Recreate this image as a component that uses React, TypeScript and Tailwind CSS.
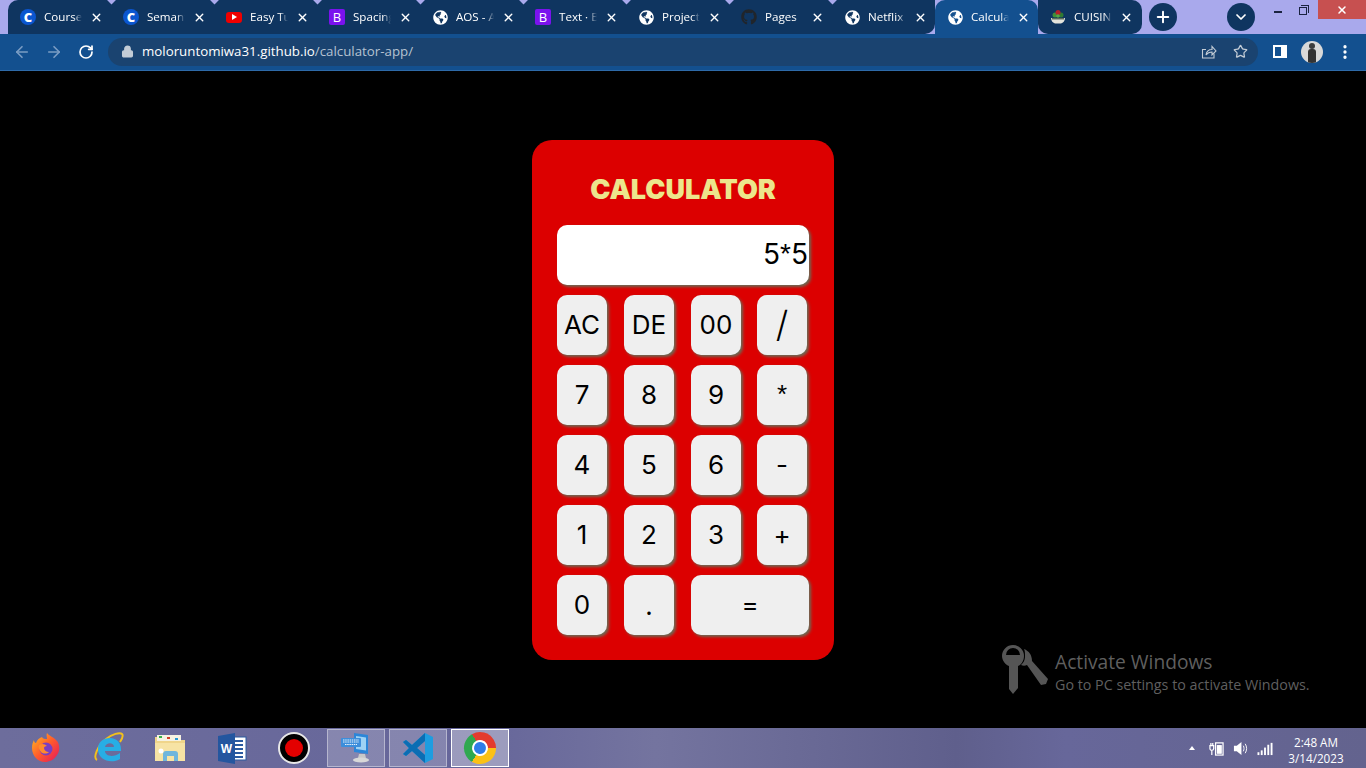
import { FaGithub, FaGlobeAmericas } from "react-icons/fa";
import { ArrowLeft, ArrowRight, ChevronDown, Lock, MoreVertical, Plus, RotateCw, Star, X } from "lucide-react";

type Tab = { title: string; icon: "c" | "yt" | "b" | "globe" | "gh" | "food"; active?: boolean };

const tabs: Tab[] = [
  { title: "Coursera", icon: "c" },
  { title: "Semantic", icon: "c" },
  { title: "Easy Tutorials", icon: "yt" },
  { title: "Spacing", icon: "b" },
  { title: "AOS - Animate", icon: "globe" },
  { title: "Text · Bootstrap", icon: "b" },
  { title: "Project", icon: "globe" },
  { title: "Pages", icon: "gh" },
  { title: "Netflix", icon: "globe" },
  { title: "Calculator", icon: "globe", active: true },
  { title: "CUISINE", icon: "food" },
];

const keys = [
  ["AC", "DE", "00", "/"],
  ["7", "8", "9", "*"],
  ["4", "5", "6", "-"],
  ["1", "2", "3", "+"],
];

const keyClass =
  "flex h-[60px] w-[50px] items-center justify-center rounded-[10px] bg-[#efefef] pb-[2px] text-[26px] text-black shadow-[2px_2px_3px_#6b6b55]";

const KeyLabel = ({ label }: { label: string }) => {
  if (label === "*") return <span className="font-['Liberation_Sans',sans-serif]">*</span>;
  if (label === "/") return <span className="text-[36px] font-light">/</span>;
  return <>{label}</>;
};

const Favicon = ({ icon }: { icon: Tab["icon"] }) => {
  if (icon === "c")
    return (
      <span className="flex h-4 w-4 items-center justify-center rounded-full bg-[#0b56d0] text-[13px] font-extrabold leading-none text-white">
        C
      </span>
    );
  if (icon === "yt")
    return (
      <span className="flex h-[11px] w-4 items-center justify-center rounded-[3px] bg-[#f00000]">
        <span className="h-0 w-0 border-y-[3px] border-l-[5px] border-y-transparent border-l-white" />
      </span>
    );
  if (icon === "b")
    return (
      <span className="flex h-4 w-4 items-center justify-center rounded-[2px] bg-[#7a12ee] text-[13px] leading-none text-white">
        B
      </span>
    );
  if (icon === "globe") return <FaGlobeAmericas className="h-[15px] w-[15px] text-white" />;
  if (icon === "gh") return <FaGithub className="h-4 w-4 text-[#20252b]" />;
  return (
    <svg viewBox="0 0 16 16" className="h-4 w-4">
      <path d="M1 9h14c0 3-2 5-4 5.500H5C3 14 1 12 1 9z" fill="#e4e4dc" />
      <rect x="2" y="9" width="12" height="1.500" fill="#5b6b5b" />
      <circle cx="5" cy="6" r="2.500" fill="#3f8f3a" />
      <circle cx="11" cy="6" r="2.500" fill="#2f7a32" />
      <circle cx="8" cy="3.500" r="2.500" fill="#b3202a" />
      <circle cx="8" cy="7" r="1.800" fill="#58a845" />
    </svg>
  );
};

const TabItem = ({ tab, index }: { tab: Tab; index: number }) => (
  <div
    className={`relative flex h-[34px] w-[103px] items-center pl-3 ${
      tab.active ? "rounded-t-[10px] bg-[#13508f]" : "bg-[#0f3560]"
    } ${index === 0 ? "rounded-tl-[10px]" : ""} ${index === tabs.length - 1 ? "w-[104px] rounded-r-[10px] rounded-bl-[10px]" : ""} ${
      index === 8 ? "rounded-br-[10px]" : ""
    }`}
  >
    <span className="flex w-4 shrink-0 items-center justify-center">
      <Favicon icon={tab.icon} />
    </span>
    <span className="ml-2 w-[38px] overflow-hidden whitespace-nowrap text-[11.600px] text-white [mask-image:linear-gradient(to_right,black_78%,transparent)]">
      {tab.title}
    </span>
    <X className="ml-[8px] h-[13px] w-[13px] text-white" strokeWidth={2.6} />
    {index < 8 && <span className="absolute -right-px top-[7px] h-5 w-px bg-[#5f7a99]" />}
    {index < 8 && (
      <span className="absolute -right-[4px] -top-[4px] z-10 h-[7px] w-[7px] rotate-45 bg-[#a9a9ec]" />
    )}
  </div>
);

const Firefox = () => (
  <svg viewBox="0 0 32 32" className="h-8 w-8">
    <defs>
      <linearGradient id="ff" x1="0" y1="0" x2="1" y2="1">
        <stop offset="0" stopColor="#ffc11f" />
        <stop offset="0.5" stopColor="#ff5a2c" />
        <stop offset="1" stopColor="#e3155f" />
      </linearGradient>
    </defs>
    <path d="M17 1c2 3 7 4 10 8 3 4 3 10 0 14-3 5-8 7-12 7C8 30 2 24 2 16c0-4 1-6 2-8 0 2 1 3 2 3 1-3 3-5 6-6 1 2 3 2 5 2 0-2-1-4 0-6z" fill="url(#ff)" />
    <circle cx="16" cy="17" r="6.500" fill="#7a3ec0" />
    <path d="M9 13c3-2 6-1 8 1-2 0-3 1-3 2 0 2 2 4 5 4-2 2-6 2-8 0-2-2-3-5-2-7z" fill="#ff8a2c" />
  </svg>
);

const IeIcon = () => (
  <svg viewBox="0 0 32 32" className="h-8 w-8">
    <path d="M5 28C1 26 5 14 14 7c6-5 14-7 16-5 2 2 0 5-2 8" fill="none" stroke="#f2c01c" strokeWidth="2" />
    <path d="M6 17c0-7 5-11 12-11s11 5 11 11v2H13c0 5 8 7 15 2v6c-8 5-22 2-22-10zm7-2h9c0-5-8-5-9 0z" fill="#27aee5" />
  </svg>
);

const Explorer = () => (
  <svg viewBox="0 0 32 32" className="h-8 w-8">
    <path d="M1 5h12l2 3h16v21H1z" fill="#f0d58a" />
    <rect x="3" y="3" width="24" height="6" fill="#f6f2e2" />
    <rect x="5" y="4" width="3" height="2" fill="#36b24a" />
    <rect x="13" y="5" width="3" height="2" fill="#d4402a" />
    <rect x="21" y="6" width="3" height="2" fill="#2a9ad4" />
    <path d="M1 11h30v18H1z" fill="#f7e3a4" />
    <path d="M9 29v-7c0-2 1-3 3-3h9c2 0 3 1 3 3v7h-4v-5h-7v5z" fill="#6fb6dc" />
    <circle cx="7" cy="19" r="2.500" fill="#fff" />
  </svg>
);

const Word = () => (
  <svg viewBox="0 0 32 32" className="h-8 w-8">
    <rect x="14" y="5" width="16" height="23" fill="#fff" stroke="#2a5aa0" />
    <path d="M17 9h10M17 13h10M17 17h10M17 21h10M17 25h10" stroke="#2a5aa0" strokeWidth="1.800" />
    <path d="M2 4l17-3v31L2 29z" fill="#24569f" />
    <text x="10.500" y="21" textAnchor="middle" fontSize="12" fontWeight="700" fill="#fff" fontFamily="Liberation Sans, sans-serif">W</text>
  </svg>
);

const Recorder = () => (
  <span className="flex h-8 w-8 items-center justify-center rounded-full border-2 border-[#e8e8e8] bg-black">
    <span className="h-[18px] w-[18px] rounded-full bg-[#e30000]" />
  </span>
);

const Remote = () => (
  <svg viewBox="0 0 32 32" className="h-8 w-8">
    <path d="M14 1l14 2v19l-14-2z" fill="#2c86d8" />
    <path d="M16 4l10 1.500v13L16 17z" fill="#9ed2f4" />
    <path d="M19 22h6l1 4h-8z" fill="#c8c8c8" />
    <ellipse cx="21" cy="28" rx="8" ry="2.500" fill="#d8d8d8" />
    <rect x="1" y="6" width="20" height="9" rx="1" fill="#3d8edb" />
    <path d="M3 8h16M3 10h16M5 12.500h12" stroke="#e6f2fb" strokeWidth="1.200" strokeDasharray="1.500 0.700" />
  </svg>
);

const VsCode = () => (
  <svg viewBox="0 0 32 32" className="h-8 w-8">
    <path d="M23 1l8 4v22l-8 4-13-12-6 5-3-2 6-6-6-6 3-2 6 5zm0 8l-8 7 8 7z" fill="#1e9de0" />
    <path d="M23 1v8l-8 7 8 7v8L10 19l-6 5-3-2 6-6-6-6 3-2 6 5z" fill="#0b6db3" />
  </svg>
);

const Chrome = () => (
  <span className="relative flex h-8 w-8 items-center justify-center rounded-full bg-[conic-gradient(#e33b2e_0deg_120deg,#fbc116_120deg_240deg,#2fa84f_240deg_360deg)] [rotate:-30deg]">
    <span className="flex h-[16px] w-[16px] items-center justify-center rounded-full bg-white">
      <span className="h-3 w-3 rounded-full bg-[#2f7de8]" />
    </span>
  </span>
);

const taskbarIcons = [
  { id: "firefox", node: <Firefox /> },
  { id: "ie", node: <IeIcon /> },
  { id: "explorer", node: <Explorer /> },
  { id: "word", node: <Word /> },
  { id: "recorder", node: <Recorder /> },
];

const framedIcons = [
  { id: "remote", node: <Remote />, active: false },
  { id: "vscode", node: <VsCode />, active: false },
  { id: "chrome", node: <Chrome />, active: true },
];

export default function App() {
  return (
    <div className="flex h-[768px] w-[1366px] flex-col overflow-hidden bg-black font-['Open_Sans',sans-serif]">
      {/* tab strip */}
      <div className="relative flex h-[34px] shrink-0 bg-[#a9a9ec] pl-2">
        {tabs.map((tab, index) => (
          <TabItem key={index} tab={tab} index={index} />
        ))}
        <span className="ml-[7px] mt-[3px] flex h-7 w-7 items-center justify-center rounded-full bg-[#0f3560]">
          <Plus className="h-[18px] w-[18px] text-white" strokeWidth={2.6} />
        </span>
        <span className="ml-[50px] mt-[3px] flex h-7 w-7 items-center justify-center rounded-full bg-[#0f3560]">
          <ChevronDown className="h-4 w-4 text-white" strokeWidth={2.6} />
        </span>
        <span className="ml-[19px] mt-[11px] h-[2px] w-[8px] bg-[#1a2340]" />
        <span className="relative ml-[17px] mt-[7px] h-[8px] w-[8px] border border-[#1a2340] bg-[#a9a9ec]">
          <span className="absolute -right-[3px] -top-[3px] h-[8px] w-[8px] border-r border-t border-[#1a2340]" />
        </span>
        <span className="ml-[11px] flex h-[19px] w-[48px] items-center justify-center bg-[#c75050]">
          <X className="h-[12px] w-[12px] text-white" strokeWidth={3} />
        </span>
      </div>

      {/* toolbar */}
      <div className="flex h-[37px] shrink-0 items-center border-b border-[#2e6aa8] bg-[#13508f] pb-[1px]">
        <ArrowLeft className="ml-[13px] h-[18px] w-[18px] text-[#7b9dc4]" strokeWidth={2.2} />
        <ArrowRight className="ml-[14px] h-[18px] w-[18px] text-[#7b9dc4]" strokeWidth={2.2} />
        <RotateCw className="ml-[15px] h-[16px] w-[16px] text-white" strokeWidth={2.6} />
        <div className="ml-[14px] flex h-7 w-[1150px] items-center rounded-full bg-[#1a4370] pl-[13px]">
          <Lock className="h-[13px] w-[13px] fill-[#c3ccd6] text-[#c3ccd6]" strokeWidth={2.4} />
          <span className="ml-[8px] text-[13.300px] text-white">
            moloruntomiwa31.github.io<span className="text-[#b5c2d1]">/calculator-app/</span>
          </span>
          <svg viewBox="0 0 16 16" className="ml-auto h-4 w-4 text-[#c3ccd6]" fill="none" stroke="currentColor" strokeWidth="1.100">
            <path d="M13 9.500V14H1.500V5.500H5" />
            <path d="M5 11c.5-3.500 3-5.500 6-5.500V2.500l4 4.500-4 4V8C8.500 8 6.500 9 5 11z" />
          </svg>
          <Star className="ml-[16px] mr-[10px] h-[15px] w-[15px] text-[#c3ccd6]" strokeWidth={2} />
        </div>
        <span className="ml-[15px] flex h-[13px] w-[14px] justify-end border-[2px] border-white">
          <span className="h-full w-[4px] bg-white" />
        </span>
        <span className="relative ml-[14px] flex h-[22px] w-[22px] items-center justify-center overflow-hidden rounded-full bg-[#d9d9d9]">
          <span className="absolute left-[8px] top-[2px] h-[6px] w-[6px] rounded-full bg-[#3c3c3c]" />
          <span className="absolute left-[7px] top-[8px] h-[14px] w-[8px] rounded-t-[3px] bg-[#333333]" />
        </span>
        <MoreVertical className="ml-[13px] h-[18px] w-[18px] text-white" strokeWidth={2.4} />
      </div>

      {/* page */}
      <main className="relative flex flex-1 justify-center bg-black pt-[69px]">
        <div className="h-[520px] w-[302px] rounded-[20px] bg-[#dc0000] px-[25px] pt-[25px] font-[Inter,sans-serif]">
          <h1 className="flex h-[50px] items-center justify-center text-[27px] font-black text-[#ece68c]">CALCULATOR</h1>
          <div className="mt-[10px] flex h-[60px] w-[252px] items-center justify-end rounded-[10px] bg-white pb-[2px] pr-px text-[28px] text-black shadow-[2px_2px_3px_#6b6b55]">
            5<span className="font-['Liberation_Sans',sans-serif]">*</span>5
          </div>
          <div className="mt-[10px] grid grid-cols-[67px_67px_66px_52px] gap-y-[10px]">
            {keys.flat().map((key) => (
              <button key={key} className={keyClass}>
                <KeyLabel label={key} />
              </button>
            ))}
            <button className={keyClass}>0</button>
            <button className={`${keyClass} pt-[2px]`}>.</button>
            <button className={`${keyClass} col-span-2 w-[118px]`}>=</button>
          </div>
        </div>

        {/* activation watermark */}
        <div className="absolute left-[1002px] top-[574px] flex text-[#5f5f5f]">
          <svg viewBox="0 0 46 50" className="h-[50px] w-[46px]" fill="#555555">
            <path d="M11 0a11 11 0 0 1 11 11c0 5-3 9-6 10v22l-5 6-4-5V21C4 20 0 16 0 11A11 11 0 0 1 11 0zM4 10h14a7 7 0 0 0-14 0z" fillRule="evenodd" />
            <path d="M22 4c5 2 8 6 8 12l16 18-2 5-5 1-14-20c-2 1-4 1-6 0 2-2 4-4 4-9 0-3 0-5-1-7z" />
          </svg>
          <div className="ml-[7px] pt-[3px]">
            <p className="text-[19.200px] leading-[27px]">Activate Windows</p>
            <p className="text-[14.300px] leading-[19px]">Go to PC settings to activate Windows.</p>
          </div>
        </div>
      </main>

      {/* taskbar */}
      <footer className="flex h-[40px] shrink-0 items-center bg-[linear-gradient(to_right,#6d6d9c_0%,#66669a_35%,#74749f_48%,#5f5f8c_70%,#67679a_78%,#63638e_100%)] pl-[15px] text-white">
        {taskbarIcons.map((icon) => (
          <span key={icon.id} className="flex w-[62px] justify-center">
            {icon.node}
          </span>
        ))}
        <div className="ml-[2px] flex gap-[4px]">
          {framedIcons.map((icon) => (
            <span
              key={icon.id}
              className={`flex h-[38px] w-[58px] items-center justify-center border ${
                icon.active ? "border-white bg-white/35" : "border-white/40 bg-white/20"
              }`}
            >
              {icon.node}
            </span>
          ))}
        </div>
        <span className="ml-auto h-0 w-0 border-x-[3.500px] border-b-[4px] border-x-transparent border-b-white" />
        <svg viewBox="0 0 16 16" className="ml-[14px] h-[15px] w-[15px]" fill="none" stroke="white" strokeWidth="1.300">
          <rect x="7" y="2" width="8" height="13" />
          <rect x="9" y="5" width="4" height="8" fill="white" />
          <path d="M1 5h4v3a2 2 0 0 1-4 0zM2 2v3M4 2v3M3 10v5" />
        </svg>
        <svg viewBox="0 0 16 16" className="ml-[9px] h-[15px] w-[15px]" fill="white">
          <path d="M1 5h3l5-4v14l-5-4H1z" />
          <path d="M11 5c1 2 1 4 0 6M13 3c2 3 2 7 0 10" stroke="white" fill="none" />
        </svg>
        <svg viewBox="0 0 16 16" className="ml-[9px] h-[15px] w-[16px]" fill="white">
          <rect x="0" y="12" width="2" height="3" />
          <rect x="3.500" y="10" width="2" height="5" />
          <rect x="7" y="7" width="2" height="8" />
          <rect x="10.500" y="4" width="2" height="11" />
          <rect x="14" y="2" width="2" height="13" />
        </svg>
        <div className="ml-[15px] mr-[22px] w-[56px] pt-[3px] text-center text-[11.700px] leading-[16px]">
          <p>2:48 AM</p>
          <p>3/14/2023</p>
        </div>
      </footer>
    </div>
  );
}
